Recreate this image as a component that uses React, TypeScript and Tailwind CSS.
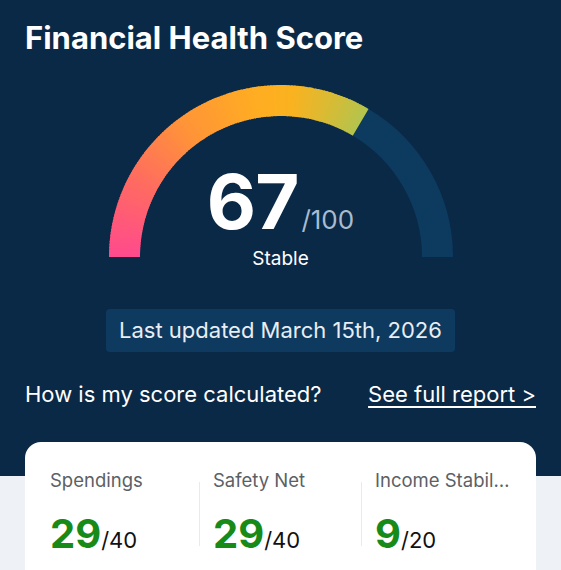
import React from "react";

const stops: [number, [number, number, number]][] = [
  [0, [255, 74, 142]],
  [0.15, [255, 106, 98]],
  [0.3, [255, 148, 56]],
  [0.45, [255, 173, 34]],
  [0.52, [251, 178, 31]],
  [0.6, [216, 187, 53]],
  [0.67, [179, 196, 78]],
];

function colorAt(f: number) {
  for (let i = 0; i < stops.length - 1; i++) {
    const [f0, c0] = stops[i];
    const [f1, c1] = stops[i + 1];
    if (f >= f0 && f <= f1) {
      const t = (f - f0) / (f1 - f0);
      const c = c0.map((v, k) => Math.round(v + (c1[k] - v) * t));
      return `rgb(${c[0]},${c[1]},${c[2]})`;
    }
  }
  const c = stops[stops.length - 1][1];
  return `rgb(${c[0]},${c[1]},${c[2]})`;
}

const CX = 172;
const CY = 172;
const R = 156.5;

function pt(f: number) {
  const a = Math.PI * (1 - f);
  return [CX + R * Math.cos(a), CY - R * Math.sin(a)];
}

function arc(f0: number, f1: number) {
  const [x0, y0] = pt(f0);
  const [x1, y1] = pt(f1);
  return `M ${x0} ${y0} A ${R} ${R} 0 0 1 ${x1} ${y1}`;
}

function Gauge({ value }: { value: number }) {
  const p = value / 100;
  const N = 120;
  const segs = [];
  for (let i = 0; i < N; i++) {
    const a = (p * i) / N;
    const b = Math.min(p, (p * (i + 1)) / N + 0.002);
    segs.push(
      <path key={i} d={arc(a, b)} stroke={colorAt((a + b) / 2)} strokeWidth={31} fill="none" />
    );
  }
  return (
    <svg width={344} height={172} viewBox="0 0 344 172" className="block">
      <path d={arc(p, 1)} stroke="#0d3a5f" strokeWidth={31} fill="none" />
      {segs}
    </svg>
  );
}

function Metric({ label, value, total }: { label: string; value: number; total: number }) {
  return (
    <div className="flex flex-col min-w-0">
      <div className="text-[18.5px] leading-[24px] text-[#5b5f66] truncate">{label}</div>
      <div className="mt-[20px] flex items-baseline">
        <span className="text-[40px] leading-[44px] font-bold text-[#178a17]">{value}</span>
        <span className="text-[22px] leading-[28px] text-[#111]">/{total}</span>
      </div>
    </div>
  );
}

export default function App() {
  return (
    <div
      className="w-[561px] min-h-[570px] bg-[#eef2f6] overflow-hidden"
      style={{ fontFamily: "Inter, 'Noto Sans', sans-serif" }}
    >
      <div className="bg-[#0a2946] px-[25px] pt-[19px] pb-[68px]">
        <h1 className="text-[31px] leading-[38px] font-bold text-white">Financial Health Score</h1>
        <div className="relative w-[344px] h-[172px] mx-auto mt-[28px]">
          <Gauge value={67} />
          <div className="absolute left-0 right-0 top-[76px] flex flex-col items-center">
            <div className="flex items-baseline">
              <span className="text-[76px] leading-[80px] font-bold text-white tracking-[-1px]">67</span>
              <span className="ml-[3px] text-[26px] leading-[30px] text-[#a7bccf]">/100</span>
            </div>
            <div className="mt-[6px] text-[19px] leading-[24px] text-white">Stable</div>
          </div>
        </div>
        <div className="mt-[52px] flex justify-center">
          <div className="h-[43px] px-[13px] flex items-center rounded-[4px] bg-[#0f3a60] text-[22px] text-[#e8eef4]">
            Last updated March 15th, 2026
          </div>
        </div>
        <div className="mt-[28px] flex items-center justify-between text-[22px] leading-[28px] text-white">
          <span>How is my score calculated?</span>
          <a className="underline underline-offset-[4px] decoration-[1.5px] cursor-pointer">See full report &gt;</a>
        </div>
      </div>
      <div className="relative -mt-[34px] mx-[25px] bg-white rounded-[16px] pt-[26px] pb-[40px] pl-[25px] pr-[24px] flex">
        <div className="w-[149px] flex-none">
          <Metric label="Spendings" value={29} total={40} />
        </div>
        <div className="w-px bg-[#e8eaed] mt-[14px] h-[64px] flex-none" />
        <div className="w-[161px] flex-none pl-[13px]">
          <Metric label="Safety Net" value={29} total={40} />
        </div>
        <div className="w-px bg-[#e8eaed] mt-[14px] h-[64px] flex-none" />
        <div className="flex-1 min-w-0 pl-[13px]">
          <Metric label="Income Stability" value={9} total={20} />
        </div>
      </div>
    </div>
  );
}
